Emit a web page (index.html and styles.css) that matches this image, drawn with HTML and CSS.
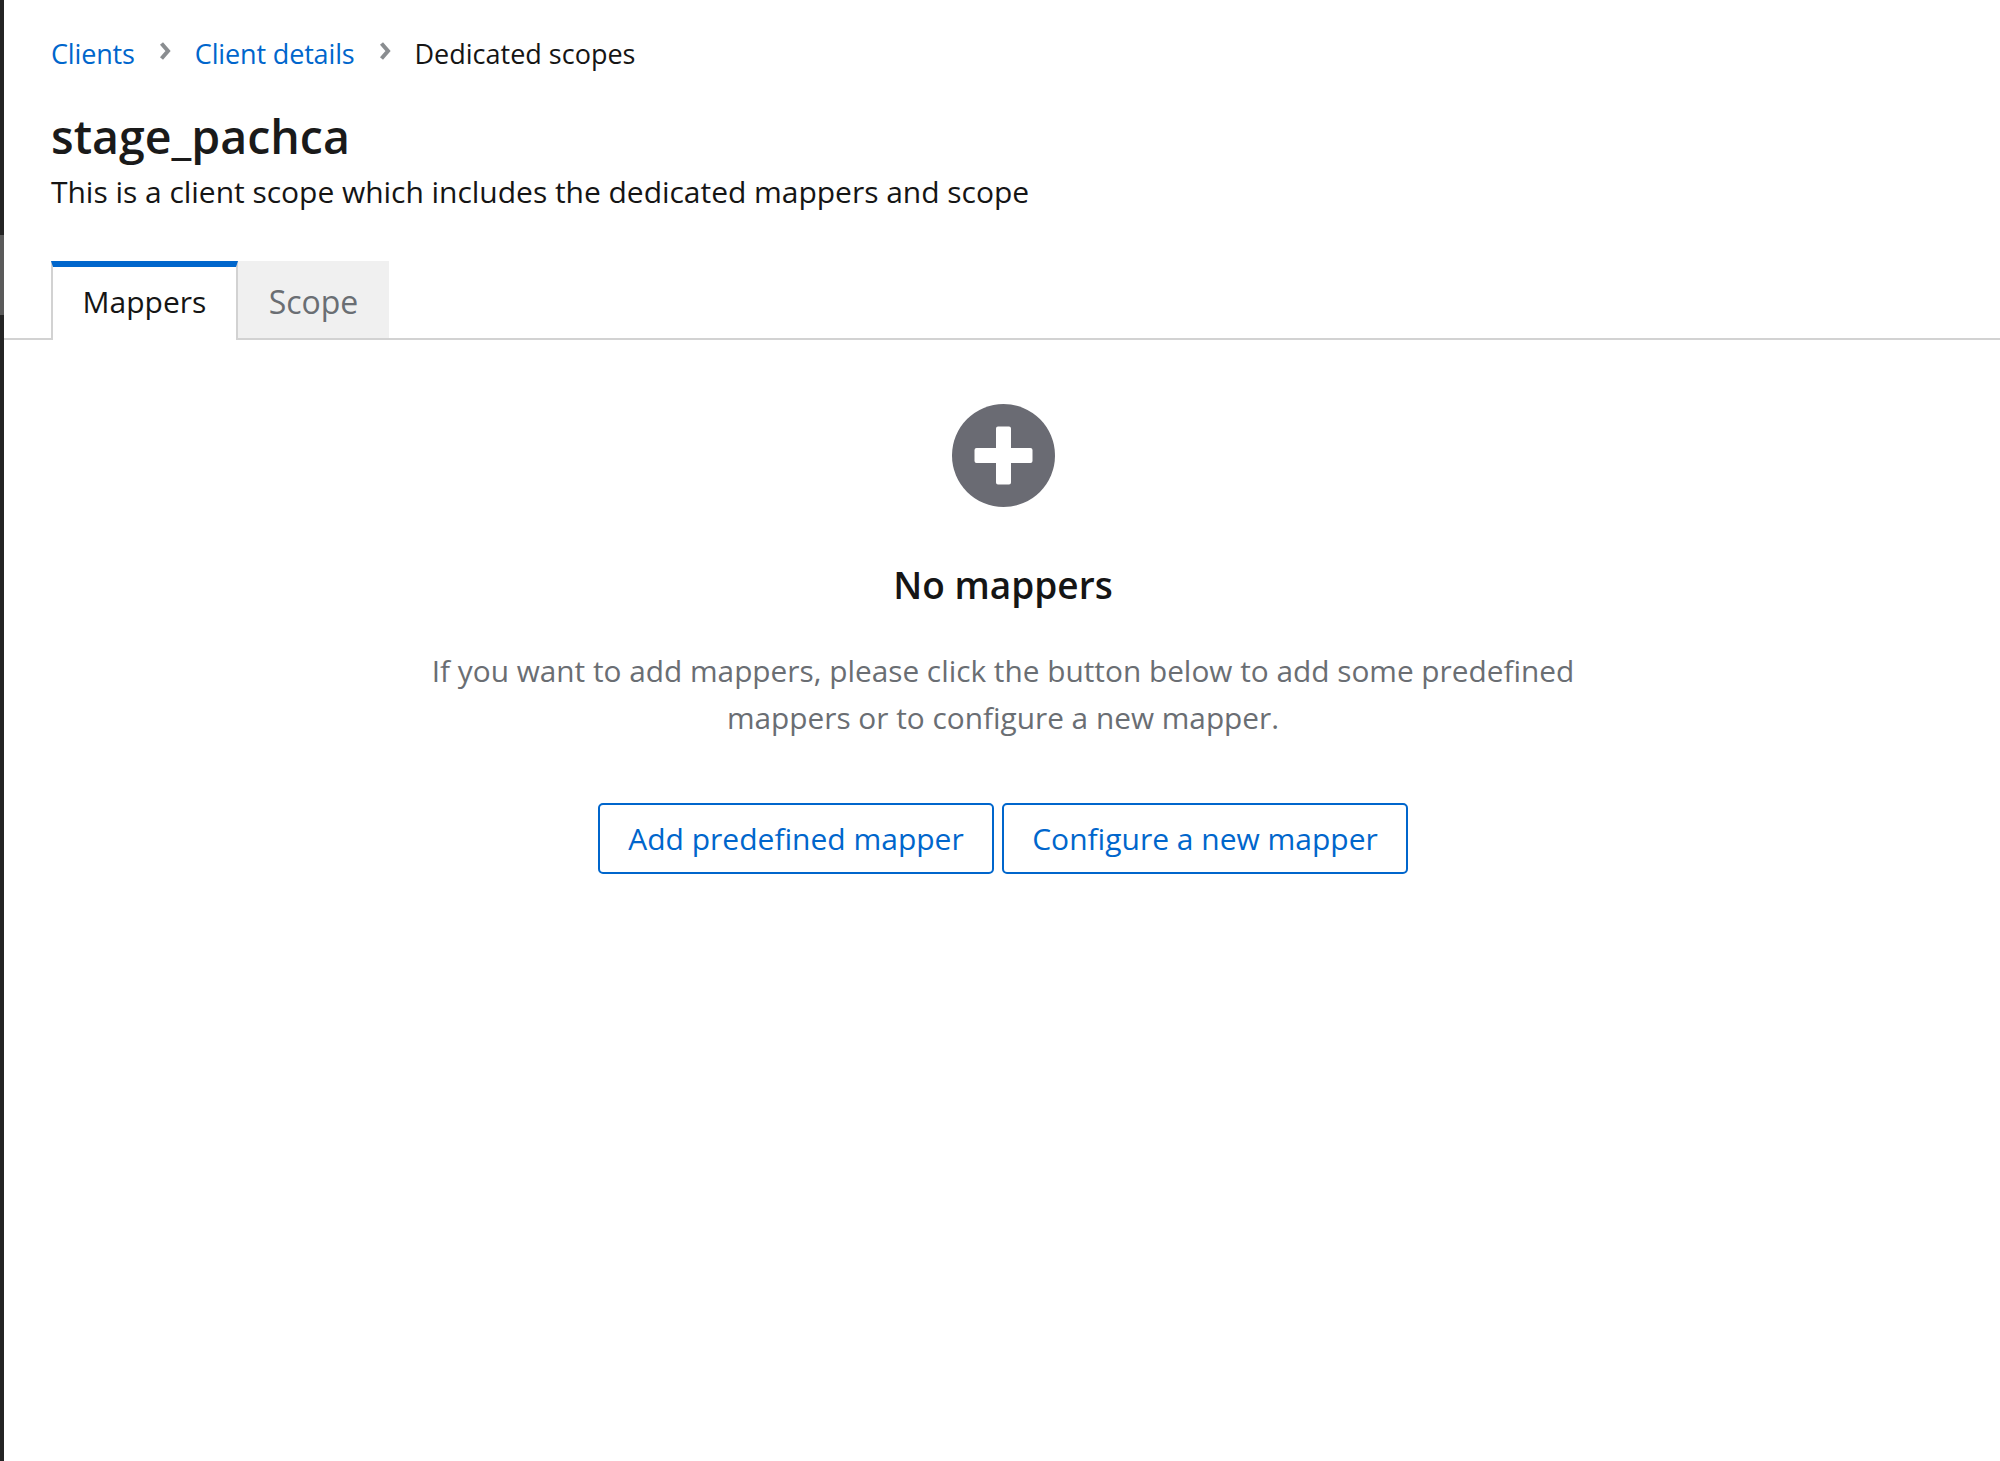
FILE: index.html
```html
<!DOCTYPE html>
<html lang="en">
<head>
<meta charset="utf-8">
<title>Dedicated scopes</title>
<link rel="stylesheet" href="styles.css">
</head>
<body>
<div class="app">
  <div class="edge">
    <div class="edge-a"></div>
    <div class="edge-b"></div>
    <div class="edge-c"></div>
  </div>
  <main class="main">
    <nav class="crumbs">
      <a class="crumb-link">Clients</a>
      <svg class="chev" viewBox="0 0 12 20"><path d="M2.500 2.500 9 10l-6.500 7.500" fill="none" stroke="#8a8d90" stroke-width="4"/></svg>
      <a class="crumb-link">Client details</a>
      <svg class="chev" viewBox="0 0 12 20"><path d="M2.500 2.500 9 10l-6.500 7.500" fill="none" stroke="#8a8d90" stroke-width="4"/></svg>
      <span class="crumb-current">Dedicated scopes</span>
    </nav>
    <h1 class="title">stage_pachca</h1>
    <p class="subtitle">This is a client scope which includes the dedicated mappers and scope</p>
    <div class="tabs">
      <div class="tab tab-active">Mappers</div>
      <div class="tab tab-idle">Scope</div>
    </div>
    <section class="empty">
      <svg class="empty-icon" viewBox="0 0 103 103">
        <circle cx="51.500" cy="51.500" r="51.500" fill="#6a6b73"/>
        <path d="M44 24.500a2 2 0 0 1 2-2h11a2 2 0 0 1 2 2V44h19.500a2 2 0 0 1 2 2v11a2 2 0 0 1-2 2H59v19.500a2 2 0 0 1-2 2H46a2 2 0 0 1-2-2V59H24.500a2 2 0 0 1-2-2V46a2 2 0 0 1 2-2H44z" fill="#fff"/>
      </svg>
      <h2 class="empty-title">No mappers</h2>
      <p class="empty-body">If you want to add mappers, please click the button below to add some predefined mappers or to configure a new mapper.</p>
      <div class="actions">
        <button class="btn btn-first">Add predefined mapper</button>
        <button class="btn btn-second">Configure a new mapper</button>
      </div>
    </section>
  </main>
</div>
</body>
</html>
```
FILE: styles.css
```css
html, body { margin: 0; padding: 0; background: #fff; }
body { font-family: "Open Sans", "Noto Sans", sans-serif; color: #151515; }
.app { display: flex; height: 1461px; overflow: hidden; }
.edge { width: 4px; flex: none; display: flex; flex-direction: column; background: #242424; }
.edge-a { height: 235px; background: #242424; }
.edge-b { height: 80px; background: #5a5a5a; }
.edge-c { flex: 1; background: #242424; }
.main { flex: 1; min-width: 0; display: flex; flex-direction: column; }
.crumbs { display: flex; align-items: center; height: 40px; margin-top: 33px; padding-left: 47px; font-size: 27px; }
.crumb-link { color: #0066cc; letter-spacing: -0.150px; }
.crumb-current { color: #151515; }
.chev { width: 12px; height: 20px; margin: -4px 23.500px 0 24.500px; }
.title { margin: 31px 0 0; padding-left: 47px; font-size: 46.500px; line-height: 64px; font-weight: 600; color: #1a1a1a; }
.subtitle { margin: 4px 0 0; padding-left: 47px; font-size: 30px; line-height: 40px; letter-spacing: -0.030px; }
.tabs { display: flex; height: 77px; margin-top: 49px; padding-left: 47px; border-bottom: 2px solid #d2d2d2; }
.tab { display: flex; align-items: center; justify-content: center; font-size: 30px; }
.tab-active { width: 183px; padding-bottom: 4px; border-top: 6px solid #0066cc; border-left: 2px solid #d2d2d2; border-right: 2px solid #d2d2d2; margin-bottom: -2px; background: #fff; }
.tab-idle { width: 151px; padding-top: 4px; background: #f0f0f0; color: #6a6e73; font-size: 32px; }
.empty { display: flex; flex-direction: column; align-items: center; padding: 64px 0 0 2px; }
.empty-icon { width: 103px; height: 103px; display: block; }
.empty-title { margin: 51px 0 0; font-size: 37px; line-height: 54px; font-weight: 600; color: #151515; }
.empty-body { width: 1160px; margin: 35px 0 0; font-size: 29.800px; line-height: 47px; text-align: center; color: #6a6e73; }
.actions { display: flex; gap: 8px; margin-top: 62px; }
.btn { height: 71px; padding: 0; font: inherit; font-size: 30px; color: #0066cc; background: #fff; border: 2px solid #0066cc; border-radius: 5px; }
.btn-first { width: 396px; }
.btn-second { width: 406px; }
```
